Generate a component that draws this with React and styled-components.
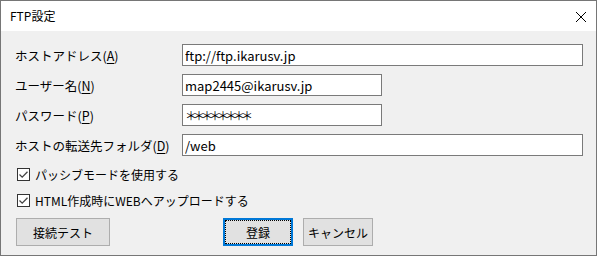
import styled, { createGlobalStyle } from "styled-components";

const GlobalStyle = createGlobalStyle`
  html, body {
    margin: 0;
    padding: 0;
    background: #ffffff;
  }
  body {
    font-family: "Noto Sans CJK JP", "Noto Sans", sans-serif;
    font-size: 12px;
    color: #000;
  }
`;

const fields = [
  { label: "ホストアドレス", key: "A", value: "ftp://ftp.ikarusv.jp", wide: true },
  { label: "ユーザー名", key: "N", value: "map2445@ikarusv.jp", wide: false },
  { label: "パスワード", key: "P", value: "＊＊＊＊＊＊＊＊", wide: false, mask: true },
  { label: "ホストの転送先フォルダ", key: "D", value: "/web", wide: true },
];

const checks = ["パッシブモードを使用する", "HTML作成時にWEBへアップロードする"];

const App = () => {
  return (
    <>
      <GlobalStyle />
      <Window>
        <TitleBar>
          <span>FTP設定</span>
          <CloseIcon width="12" height="12" viewBox="0 0 12 12">
            <path d="M1 1 L11 11 M11 1 L1 11" stroke="#000" strokeWidth="1" />
          </CloseIcon>
        </TitleBar>
        <Body>
          <Form>
            {fields.map((f) => (
              <Row key={f.key}>
                <Label>
                  {f.label}(<u>{f.key}</u>)
                </Label>
                <Field $wide={f.wide} $mask={f.mask} defaultValue={f.value} readOnly />
              </Row>
            ))}
          </Form>
          <Checks>
            {checks.map((c) => (
              <CheckRow key={c}>
                <Box>
                  <svg width="11" height="11" viewBox="0 0 11 11">
                    <path d="M1.5 5.5 L4.2 8.2 L9.5 2.8" fill="none" stroke="#444" strokeWidth="1.3" />
                  </svg>
                </Box>
                <span>{c}</span>
              </CheckRow>
            ))}
          </Checks>
          <ButtonRow>
            <Button $w={94}>接続テスト</Button>
            <ActionGroup>
              <Button $w={70} $primary>登録</Button>
              <Button $w={70}>キャンセル</Button>
            </ActionGroup>
          </ButtonRow>
        </Body>
      </Window>
    </>
  );
};

const Window = styled.div`
  width: 597px;
  height: 256px;
  box-sizing: border-box;
  border: 1px solid #767676;
  display: flex;
  flex-direction: column;
  background: #f0f0f0;
`;

const TitleBar = styled.div`
  height: 30px;
  background: #fff;
  display: flex;
  align-items: center;
  justify-content: space-between;
  padding: 0 9px 0 9px;
  font-size: 12px;
  line-height: 1;
`;

const CloseIcon = styled.svg`
  display: block;
  margin-top: 1px;
`;

const Body = styled.div`
  flex: 1;
  padding: 13px 0 0 0;
  display: flex;
  flex-direction: column;
`;

const Form = styled.div`
  display: flex;
  flex-direction: column;
  gap: 8px;
`;

const Row = styled.div`
  display: grid;
  grid-template-columns: 167px auto;
  align-items: center;
  padding-left: 14px;
  height: 22px;
`;

const Label = styled.span`
  white-space: nowrap;
  font-size: 12.5px;
  u {
    text-underline-offset: 2px;
  }
`;

const Field = styled.input`
  box-sizing: border-box;
  width: ${(p) => (p.$wide ? "401px" : "200px")};
  height: 22px;
  border: 1px solid #7a7a7a;
  background: #fff;
  padding: 0 2px;
  margin: 0;
  font-family: "Noto Sans CJK JP", "Noto Sans", sans-serif;
  font-size: ${(p) => (p.$mask ? "12px" : "13px")};
  letter-spacing: ${(p) => (p.$mask ? "-4px" : "0")};
  color: #000;
  outline: none;
`;

const Checks = styled.div`
  margin-top: 7px;
  display: flex;
  flex-direction: column;
  gap: 4px;
  padding-left: 16px;
`;

const CheckRow = styled.div`
  height: 22px;
  display: flex;
  align-items: center;
  gap: 5px;
  font-size: 12px;
`;

const Box = styled.span`
  box-sizing: border-box;
  width: 13px;
  height: 13px;
  border: 1px solid #333;
  background: #fff;
  display: flex;
  align-items: center;
  justify-content: center;
`;

const ButtonRow = styled.div`
  margin-top: 7px;
  display: flex;
  padding-left: 15px;
`;

const ActionGroup = styled.div`
  display: flex;
  gap: 10px;
  margin-left: 113px;
`;

const Button = styled.button`
  box-sizing: border-box;
  width: ${(p) => p.$w}px;
  height: 28px;
  margin: 0;
  padding: 0;
  background: #e1e1e1;
  border: ${(p) => (p.$primary ? "2px solid #0078d7" : "1px solid #adadad")};
  outline: ${(p) => (p.$primary ? "1px dotted #000" : "none")};
  outline-offset: -3px;
  font-family: "Noto Sans CJK JP", "Noto Sans", sans-serif;
  font-size: 12px;
  color: #000;
`;

export default App;
